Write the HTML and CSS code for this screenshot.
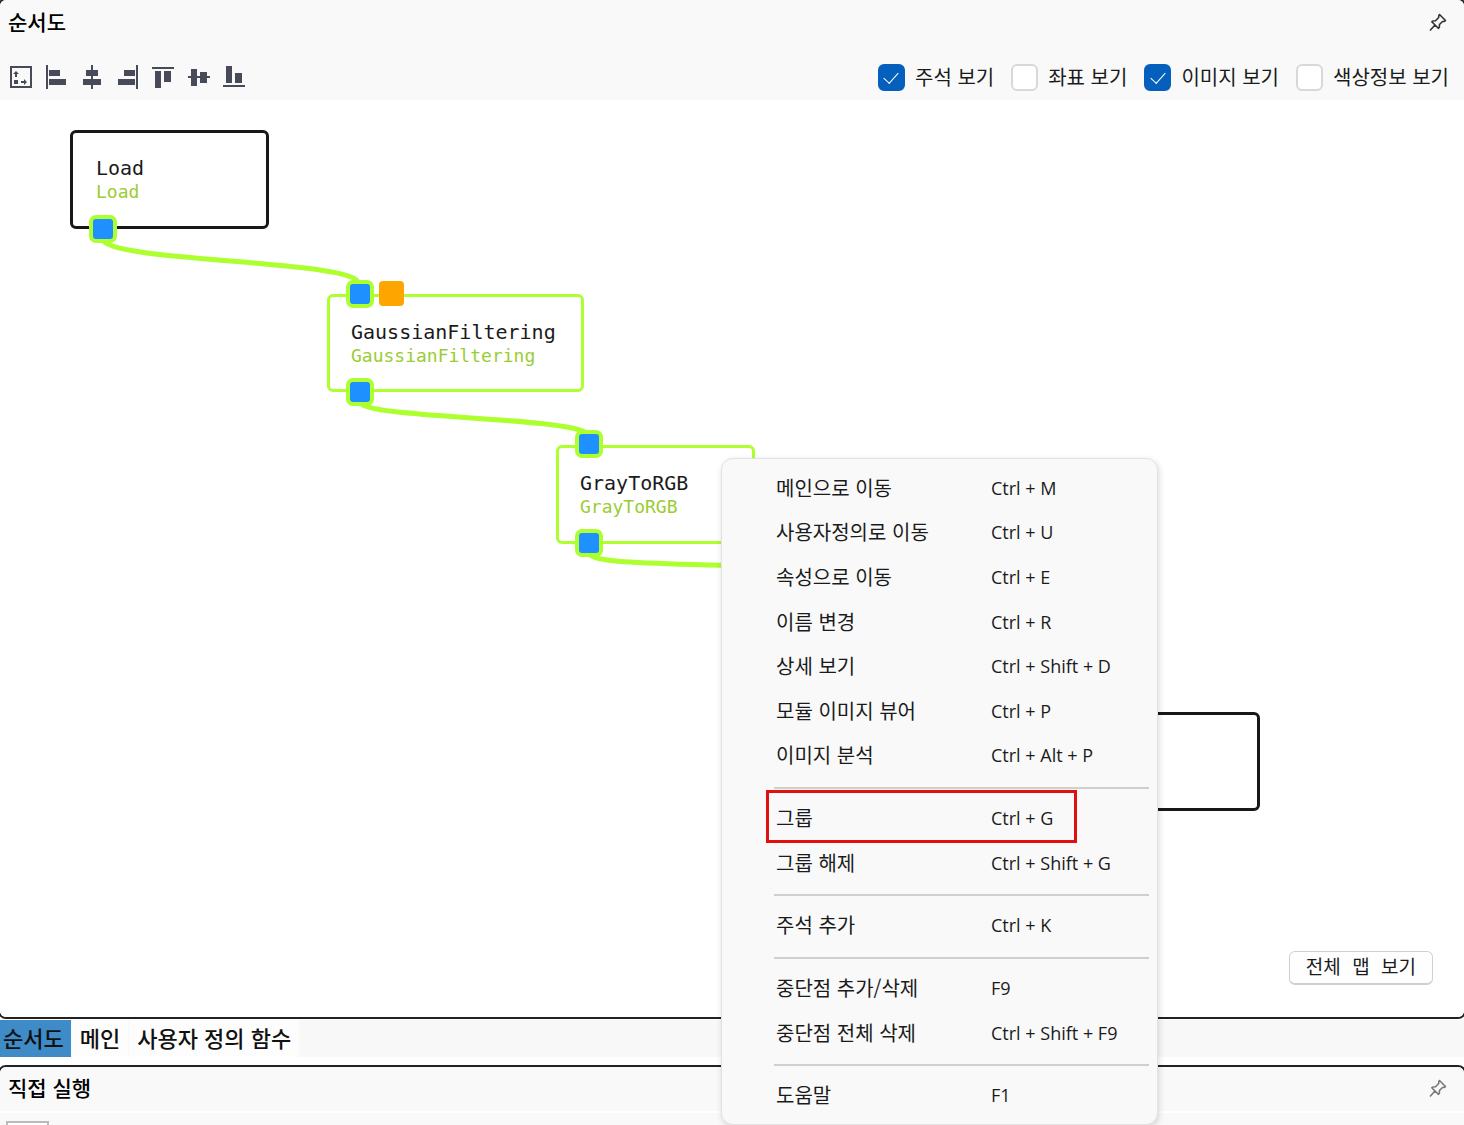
FILE: index.html
```html
<!DOCTYPE html>
<html lang="ko">
<head>
    <meta charset="UTF-8">
    <meta name="viewport" content="width=device-width, initial-scale=1.0">
    <title>순서도</title>
    <link rel="stylesheet" href="styles.css">
</head>
<body>
    <section class="panel flow-panel">
        <header class="panel-header">
            <h2>순서도</h2>
            <button class="pin" aria-label="고정">
                <svg width="20" height="20" viewBox="0 0 20 20"><path d="M11.5 2.5L17.5 8.5L16 9.5H14.5L11.5 12.5L11.3 15.5L10.3 16.3L3.8 9.8L4.8 9L7.5 8.8L10.7 5.5V3.8ZM7 13L2 18.5"/></svg>
            </button>
        </header>
        <div class="toolbar">
            <div class="tools">
                <button aria-label="자동 정렬"><svg width="24" height="24" viewBox="0 0 24 24"><path class="line" d="M2 2H22V22H2ZM7 12V8M12 17H16"/><path d="M4 9L7 6L10 9ZM15 14L18 17L15 20ZM5 15H9V19H5Z"/></svg></button>
                <button aria-label="왼쪽 맞춤"><svg width="24" height="24" viewBox="0 0 24 24"><path class="line" d="M2 0V24"/><path d="M4 5H15V11H4ZM4 14H21V20H4Z"/></svg></button>
                <button aria-label="가운데 맞춤"><svg width="24" height="24" viewBox="0 0 24 24"><path class="line" d="M12 0V24"/><path d="M6 5H18V11H6ZM3 14H21V20H3Z"/></svg></button>
                <button aria-label="오른쪽 맞춤"><svg width="24" height="24" viewBox="0 0 24 24"><path class="line" d="M21 0V24"/><path d="M8 5H19V11H8ZM2 14H19V20H2Z"/></svg></button>
                <button aria-label="위쪽 맞춤"><svg width="24" height="24" viewBox="0 0 24 24"><path class="line" d="M1 3H23"/><path d="M4 6H10V23H4ZM13 6H20V17H13Z"/></svg></button>
                <button aria-label="중간 맞춤"><svg width="24" height="24" viewBox="0 0 24 24"><path class="line" d="M1 12H23"/><path d="M4 4H10V21H4ZM13 7H20V18H13Z"/></svg></button>
                <button aria-label="아래쪽 맞춤"><svg width="24" height="24" viewBox="0 0 24 24"><path class="line" d="M1 21H23"/><path d="M4 1H10V18H4ZM13 8H20V18H13Z"/></svg></button>
            </div>
            <div class="options">
                <label><input type="checkbox" checked>주석 보기</label>
                <label><input type="checkbox">좌표 보기</label>
                <label><input type="checkbox" checked>이미지 보기</label>
                <label><input type="checkbox">색상정보 보기</label>
            </div>
        </div>
        <div class="canvas">
            <div class="node node-load">
                <strong>Load</strong>
                <span>Load</span>
            </div>
            <div class="node active node-gaussian">
                <strong>GaussianFiltering</strong>
                <span>GaussianFiltering</span>
            </div>
            <div class="node active node-gray">
                <strong>GrayToRGB</strong>
                <span>GrayToRGB</span>
            </div>
            <div class="node node-last"></div>
            <svg class="links" width="800" height="500" viewBox="0 0 800 500">
                <path d="M102 138C102 163 358 159 359 184"/>
                <path d="M359 301C359 320 588 316 588 336"/>
                <path d="M588 452C588 464 660 463 740 466"/>
            </svg>
            <i class="port load-out"></i>
            <i class="port gaussian-in"></i>
            <i class="port optional gaussian-opt"></i>
            <i class="port gaussian-out"></i>
            <i class="port gray-in"></i>
            <i class="port gray-out"></i>
            <button class="map-button">전체 맵 보기</button>
        </div>
    </section>

    <nav class="tabs">
        <button class="selected">순서도</button>
        <button>메인</button>
        <button>사용자 정의 함수</button>
    </nav>

    <section class="panel run-panel">
        <header class="panel-header">
            <h2>직접 실행</h2>
            <button class="pin dim" aria-label="고정">
                <svg width="20" height="20" viewBox="0 0 20 20"><path d="M11.5 2.5L17.5 8.5L16 9.5H14.5L11.5 12.5L11.3 15.5L10.3 16.3L3.8 9.8L4.8 9L7.5 8.8L10.7 5.5V3.8ZM7 13L2 18.5"/></svg>
            </button>
        </header>
        <div class="run-bar"><button aria-label="실행"></button></div>
    </section>

    <ul class="context-menu">
        <li><button>메인으로 이동<kbd>Ctrl + M</kbd></button></li>
        <li><button>사용자정의로 이동<kbd>Ctrl + U</kbd></button></li>
        <li><button>속성으로 이동<kbd>Ctrl + E</kbd></button></li>
        <li><button>이름 변경<kbd>Ctrl + R</kbd></button></li>
        <li><button>상세 보기<kbd>Ctrl + Shift + D</kbd></button></li>
        <li><button>모듈 이미지 뷰어<kbd>Ctrl + P</kbd></button></li>
        <li><button>이미지 분석<kbd>Ctrl + Alt + P</kbd></button></li>
        <li class="separator" role="separator"></li>
        <li class="marked"><button>그룹<kbd>Ctrl + G</kbd></button></li>
        <li><button>그룹 해제<kbd>Ctrl + Shift + G</kbd></button></li>
        <li class="separator" role="separator"></li>
        <li><button>주석 추가<kbd>Ctrl + K</kbd></button></li>
        <li class="separator" role="separator"></li>
        <li><button>중단점 추가/삭제<kbd>F9</kbd></button></li>
        <li><button>중단점 전체 삭제<kbd>Ctrl + Shift + F9</kbd></button></li>
        <li class="separator" role="separator"></li>
        <li><button>도움말<kbd>F1</kbd></button></li>
    </ul>
</body>
</html>
```
FILE: styles.css
```css
*, *::before, *::after {
    box-sizing: border-box;
}
body {
    margin: 0;
    height: 100vh;
    position: relative;
    overflow: hidden;
    display: flex;
    flex-direction: column;
    background-color: #fff;
    color: #1b1b1b;
    font-family: "Noto Sans CJK KR", sans-serif;
    font-size: 20px;
    line-height: 28px;
}
button {
    margin: 0;
    padding: 0;
    border: none;
    background: none;
    color: inherit;
    font: inherit;
    cursor: pointer;
}
svg {
    display: block;
}

/* panels */
.panel {
    margin: 0 -2px;
    border: 2px solid #222;
    border-radius: 8px;
    overflow: hidden;
    display: flex;
    flex-direction: column;
}
.flow-panel {
    flex: 1;
    margin-top: -2px;
}
.run-panel {
    margin-top: 8px;
    border-bottom: none;
    border-radius: 8px 8px 0 0;
}
.panel-header {
    height: 46px;
    padding: 0 16px 2px 8px;
    display: flex;
    align-items: center;
    justify-content: space-between;
    background-color: #f9f9f9;
}
.run-panel .panel-header {
    height: 44px;
}
.panel-header h2 {
    margin: 0;
    padding-bottom: 2px;
    font-size: 21px;
    font-weight: 500;
    color: #000;
}
.pin path {
    fill: none;
    stroke: #333;
    stroke-width: 1.6;
    stroke-linejoin: round;
}
.pin.dim path {
    stroke: #777;
}
.toolbar {
    height: 54px;
    padding: 8px 15px 0 9px;
    display: flex;
    align-items: center;
    justify-content: space-between;
    background-color: #f9f9f9;
}
.tools {
    width: 237px;
    display: flex;
    justify-content: space-between;
}
.tools path {
    fill: #474b59;
}
.tools .line {
    fill: none;
    stroke: #474b59;
    stroke-width: 2;
}
.options {
    display: flex;
    gap: 17px;
}
.options label {
    display: flex;
    align-items: center;
    gap: 10px;
}
.options input {
    appearance: none;
    width: 27px;
    height: 27px;
    margin: 0;
    border: 2px solid #d8d8d8;
    border-radius: 6px;
    background-color: #fff;
    display: flex;
    align-items: center;
    justify-content: center;
}
.options input:checked {
    border-color: #0560bd;
    background-color: #0560bd;
}
.options input:checked::after {
    content: "";
    width: 8px;
    height: 14px;
    margin-bottom: 3px;
    border: solid #fff;
    border-width: 0 1px 1px 0;
    transform: rotate(42deg);
}

/* flow chart */
.canvas {
    flex: 1;
    position: relative;
    background-color: #fff;
}
.node {
    position: absolute;
    width: 199px;
    height: 99px;
    padding: 23px 21px;
    border: 3px solid #181818;
    border-radius: 6px;
    background-color: #fff;
    font-family: "DejaVu Sans Mono", monospace;
    line-height: 24px;
}
.node.active {
    border-color: #adff2f;
}
.node strong,
.node span {
    display: block;
    font-weight: 400;
}
.node span {
    font-size: 18px;
    color: #9acd32;
}
.node-load {
    left: 70px;
    top: 30px;
    padding-left: 23px;
}
.node-gaussian {
    left: 327px;
    top: 194px;
    width: 257px;
    height: 98px;
}
.node-gray {
    left: 556px;
    top: 345px;
}
.node-last {
    left: 1061px;
    top: 612px;
}
.links {
    position: absolute;
    left: 0;
    top: 0;
}
.links path {
    fill: none;
    stroke: #adff2f;
    stroke-width: 5;
}
.port {
    position: absolute;
    width: 28px;
    height: 28px;
    border: 4px solid #adff2f;
    border-radius: 7px;
    background-color: #1e90ff;
}
.port.optional {
    width: 25px;
    height: 25px;
    border: none;
    border-radius: 4px;
    background-color: #ffa500;
}
.load-out {
    left: 89px;
    top: 115px;
}
.gaussian-in {
    left: 346px;
    top: 180px;
}
.gaussian-opt {
    left: 379px;
    top: 181px;
}
.gaussian-out {
    left: 346px;
    top: 278px;
}
.gray-in {
    left: 575px;
    top: 330px;
}
.gray-out {
    left: 575px;
    top: 429px;
}
.map-button {
    position: absolute;
    right: 31px;
    bottom: 32px;
    height: 34px;
    padding: 2px 16px 0;
    border: 1px solid #d0d0d0;
    border-bottom-width: 2px;
    border-radius: 6px;
    background-color: #fefefe;
    font-family: "Liberation Mono", "Noto Sans CJK KR", monospace;
    font-size: 19px;
}

/* bottom tabs */
.tabs {
    height: 37px;
    margin-top: 1px;
    display: flex;
    background-color: #f8f8f8;
    font-size: 22px;
    font-weight: 500;
    color: #111;
}
.tabs button {
    padding: 0 8px 4px;
    border-right: 1px solid #f8f8f8;
    background-color: #fdfdfd;
}
.tabs .selected {
    padding: 0 7px 4px 3px;
    background-color: #3e8bc8;
}
.run-bar {
    height: 14px;
    padding: 8px 6px 0;
    border-top: 2px solid #fff;
    overflow: hidden;
    background-color: #f9f9f9;
}
.run-bar button {
    display: block;
    width: 43px;
    height: 28px;
    border: 2px solid #bbb;
    background-color: #fff;
}

/* context menu */
.context-menu {
    position: absolute;
    left: 721px;
    top: 458px;
    bottom: 0;
    width: 437px;
    margin: 0;
    padding: 7px 8px 6px 52px;
    border: 1px solid #e2e2e2;
    border-radius: 12px;
    background-color: #f9f9f9;
    box-shadow: 1px 2px 6px rgba(0, 0, 0, 0.15);
    list-style: none;
    display: flex;
    flex-direction: column;
}
.context-menu li {
    flex: 1;
    position: relative;
    display: flex;
}
.context-menu button {
    flex: 1;
    padding: 0 0 1px 2px;
    display: grid;
    grid-template-columns: 215px 1fr;
    align-items: center;
    text-align: left;
}
.context-menu kbd {
    font-family: "Open Sans", sans-serif;
    font-size: 18px;
}
.context-menu .separator {
    flex: 0 0 18px;
    padding-top: 2px;
    align-items: center;
}
.separator::before {
    content: "";
    flex: 1;
    height: 2px;
    background-color: #cfcfcf;
}
.marked::after {
    content: "";
    position: absolute;
    left: -8px;
    top: -6px;
    bottom: -2px;
    width: 311px;
    border: 3px solid #e01010;
    pointer-events: none;
}
```
